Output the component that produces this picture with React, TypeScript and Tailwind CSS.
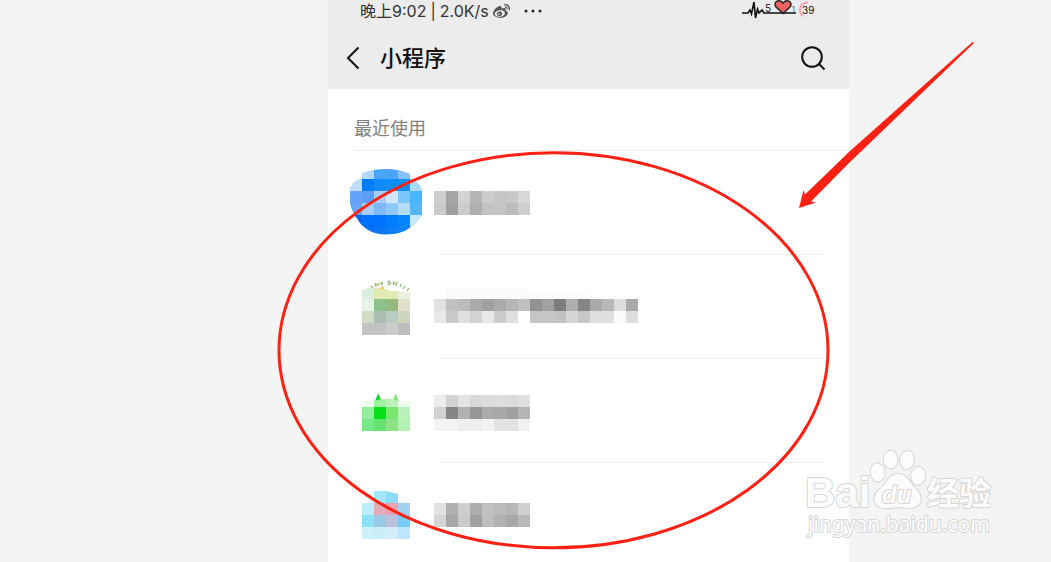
import { FaWeibo } from 'react-icons/fa'

type Cell = [x: number, y: number, color: string]

type MiniProgram = {
	id: string
	Icon: () => React.ReactNode
	nameWidth: number
	nameTop: number
	nameRows: string[][]
	nameHint?: string
}

const CELL = 12

function Cells({ cells }: { cells: Cell[] }) {
	return (
		<>
			{cells.map(([x, y, color]) => (
				<rect key={`${x}-${y}`} x={x} y={y} width={CELL} height={CELL} fill={color} />
			))}
		</>
	)
}

function toCells(rows: string[][], top: number): Cell[] {
	return rows.flatMap((row, r) => row.map((color, c): Cell => [c * CELL, top + r * CELL, color]))
}

function BlueIcon() {
	const rows = [
		['#fff', '#b3d8fb', '#49a5fa', '#49a5fa', '#80c2f9', '#fff'],
		['#bfdcfc', '#007dfb', '#108af8', '#108df7', '#0a8ffb', '#a8dcfb'],
		['#65a2fa', '#5c9ffa', '#a8cdfb', '#cfe6fb', '#7bc6f8', '#4ab5fa'],
		['#6ba5f7', '#a6cdfa', '#80b9fb', '#8fc9fa', '#b4dcf8', '#54b6f6'],
		['#0a6df5', '#0071ff', '#0071ff', '#007efd', '#0586fb', '#c7e7fb'],
	]
	return (
		<svg width="72" height="72" viewBox="0 0 72 72" aria-hidden="true" className="shrink-0">
			<defs>
				<linearGradient id="blue" x1="0" y1="0" x2="1" y2="0">
					<stop offset="0" stopColor="#0062f2" />
					<stop offset="1" stopColor="#1690fa" />
				</linearGradient>
				<clipPath id="blue-clip">
					<path d="M12 7 Q23 3 36 3 Q49 3 60 8 L60 12 Q67 14 72 23 L72 49 L66 56 Q56 68.500 36 68.500 Q16 68.500 7 52 Q3 48 0 38 L0 22 Q4 14 12 12Z" />
				</clipPath>
			</defs>
			<g clipPath="url(#blue-clip)">
				<rect y="49" width="72" height="23" fill="url(#blue)" />
				<Cells cells={toCells(rows, 1)} />
				<rect y="49" width="12" height="12" fill="#0866ee" />
			</g>
		</svg>
	)
}

function ShopIcon() {
	const rows = [
		['#e5f4e7', '#8cc28d', '#96b980', '#e0dfc8'],
		['#d2dbc5', '#acbdb4', '#b8ccc4', '#ccd7bd'],
		['#c3c3c3', '#c3c3c3', '#cbcbcb', '#bdbdbd'],
	]
	return (
		<svg width="72" height="72" viewBox="0 0 72 72" aria-hidden="true" className="shrink-0">
			<g transform="translate(12 0)">
				<path d="M0 29V21Q5 17 12 18V29Z" fill="#daeee0" />
				<path d="M12 29V18Q18 17 24 19Q29 22 36 21V29Z" fill="#e2eab4" />
				<path d="M36 29V21Q41 23 48 22V29Z" fill="#eaf0df" />
				<Cells cells={toCells(rows, 29)} />
			</g>
			<g fill="none" stroke="#9dbb78" strokeWidth="1.300">
				<path d="M21 16l2 2M25 13l1 4M26 15l2-1M28 13l1 3M30 13h3M32 13v3" />
				<path d="M40 11q-2 0-2 1t2 1t-2 2M44 11l-1 4M47 12l-1 4M44 13l2 1M51 14l-1 3M55 16l-2 3M59 18l-2 3" />
			</g>
			<circle cx="32.500" cy="18" r="1.500" fill="#f5c330" />
		</svg>
	)
}

function GreenIcon() {
	const rows = [
		['#91ee9e', '#08df1b', '#77e770', '#b9f3b7'],
		['#75e985', '#65e36e', '#8ce486', '#b5f1b0'],
	]
	return (
		<svg width="72" height="72" viewBox="0 0 72 72" aria-hidden="true" className="shrink-0">
			<g transform="translate(12 0)">
				<path d="M13 27L16 19.500L20 27Z" fill="#16cf31" />
				<path d="M30 27L33.500 19.500L37 27Z" fill="#8ce686" />
				<path d="M0 33V27H12V33Z" fill="#eefbef" />
				<path d="M12 33V27Q18 25 24 25V33Z" fill="#a2f1a3" />
				<path d="M24 33V25Q31 24 36 27V33Z" fill="#bdf3bb" />
				<path d="M36 33V27L48 28V33Z" fill="#edfbed" />
				<Cells cells={toCells(rows, 33)} />
			</g>
		</svg>
	)
}

function PinkIcon() {
	const rows = [
		['#bdebf7', '#e3a9b7', '#eaa1b3', '#a2d1f0'],
		['#8be2f7', '#99c9e5', '#b9c1dd', '#78cdf8'],
		['#cff1fb', '#caeefa', '#d3edfb', '#bce6fc'],
	]
	return (
		<svg width="72" height="72" viewBox="0 0 72 72" aria-hidden="true" className="shrink-0">
			<g transform="translate(12 0)">
				<path d="M12 13H24V25H12Z" fill="#a2e8f8" />
				<path d="M24 13L36 16V25H24Z" fill="#8bdbf8" />
				<path d="M36 17L47 20V25H36Z" fill="#f9fcfc" />
				<Cells cells={toCells(rows, 25)} />
			</g>
		</svg>
	)
}

const programs: MiniProgram[] = [
	{
		id: 'blue',
		Icon: BlueIcon,
		nameWidth: 96,
		nameTop: 25,
		nameRows: [
			['#cecece', '#a5a5a5', '#d3d3d3', '#b5b5b5', '#cdcdcd', '#c5c5c5', '#c8c8c8', '#d7d7d7'],
			['#cacaca', '#a0a0a0', '#cccccc', '#afafaf', '#c4c4c4', '#c5c5c5', '#bcbcbc', '#cecece'],
		],
	},
	{
		id: 'shop',
		Icon: ShopIcon,
		nameWidth: 204,
		nameTop: 29,
		nameHint: 'M12 29V17H60Q84 18 104 21Q150 25 204 27V29Z',
		nameRows: [
			['#e2e2e2', '#c1c1c1', '#bcbcbc', '#a9a9a9', '#a1a1a1', '#aaaaaa', '#b6b6b6', '#c0c0c0', '#929292', '#a0a0a0', '#7d7d7d', '#aeaeae', '#868686', '#aaaaaa', '#b9b9b9', '#dddddd', '#ababab'],
			['#e9e9e9', '#c8c8c8', '#e0e0e0', '#d2d2d2', '#e8e8e8', '#cccccc', '#dfdfdf', '#ffffff', '#c5c5c5', '#c5c5c5', '#c2c2c2', '#d5d5d5', '#c8c8c8', '#dedede', '#e0e0e0', '#fafafa', '#dedede'],
		],
	},
	{
		id: 'green',
		Icon: GreenIcon,
		nameWidth: 96,
		nameTop: 21,
		nameRows: [
			['#ededed', '#d3d3d3', '#e4e4e4', '#d9d9d9', '#dcdcdc', '#dddddd', '#dbdbdb', '#e0e0e0'],
			['#d2d2d2', '#868686', '#b1b1b1', '#969696', '#acacac', '#a9a9a9', '#a1a1a1', '#b5b5b5'],
			['#f3f3f3', '#f3f3f3', '#eeeeee', '#eeeeee', '#f2f2f2', '#e3e3e3', '#e3e3e3', '#f1f1f1'],
		],
	},
	{
		id: 'pink',
		Icon: PinkIcon,
		nameWidth: 96,
		nameTop: 25,
		nameRows: [
			['#e2e2e2', '#b0b0b0', '#cecece', '#adadad', '#c0c0c0', '#bbbbbb', '#b7b7b7', '#cfcfcf'],
			['#d5d5d5', '#a7a7a7', '#cacaca', '#a1a1a1', '#bebebe', '#b2b2b2', '#a8a8a8', '#b9b9b9'],
		],
	},
]

function StatusBar() {
	return (
		<div className="flex h-[22px] items-center pl-8 pr-[29px] text-base leading-5 text-[#333]">
			<span>晚上9:02</span>
			<span className="ml-1">|</span>
			<span className="ml-1">2.0K/s</span>
			<FaWeibo className="ml-1 size-[17px] text-[#555]" />
			<svg width="18" height="4" viewBox="0 0 18 4" className="ml-3.5 fill-[#222]" aria-hidden="true">
				<circle cx="2" cy="2" r="1.500" />
				<circle cx="9" cy="2" r="1.500" />
				<circle cx="16" cy="2" r="1.500" />
			</svg>
			<svg width="78" height="22" viewBox="0 0 78 22" className="ml-auto shrink-0" role="img" aria-label="39">
				<path
					d="M0 13H6L8 10L9.500 14L12 2L13.500 18L15.500 9L17 13L20 10L22 13H54"
					fill="none"
					stroke="#111"
					strokeWidth="1.600"
				/>
				<path
					d="M41 13.500L34 7C30.500 2 37-1.500 41 3C45-1.500 51.500 2 48 7Z"
					fill="#ee6262"
					stroke="#222"
					strokeWidth="1.500"
				/>
				<text x="23" y="12" fontSize="10" fill="#111">
					5
				</text>
				<text x="50" y="12" fontSize="7" fill="#444">
					1
				</text>
				<circle cx="66" cy="10" r="7" fill="none" stroke="#f0e6e6" strokeWidth="2" />
				<path d="M66 2.500A7.500 7.500 0 0 0 61 16" fill="none" stroke="#f5a3b5" strokeWidth="2" />
				<text x="60" y="14" fontSize="10" fill="#111">
					39
				</text>
			</svg>
		</div>
	)
}

function NavBar() {
	return (
		<div className="flex h-[67px] items-center pl-[18px] pr-[22px] pt-1">
			<button type="button" aria-label="返回">
				<svg width="14" height="24" viewBox="0 0 14 24" fill="none" stroke="#111" strokeWidth="2">
					<path d="M12.500 1.500L2 12L12.500 22.500" />
				</svg>
			</button>
			<h1 className="ml-5 text-[22px] font-medium leading-8 text-[#111]">小程序</h1>
			<button type="button" aria-label="搜索" className="ml-auto">
				<svg width="28" height="28" viewBox="0 0 28 28" fill="none" stroke="#111" strokeWidth="2">
					<circle cx="13" cy="13" r="9.800" />
					<path d="M20 20L25.500 25.500" />
				</svg>
			</button>
		</div>
	)
}

function ProgramRow({ program }: { program: MiniProgram }) {
	const { Icon, nameWidth, nameTop, nameRows, nameHint } = program
	return (
		<li>
			<div className="flex gap-3 pb-4 pl-[22px] pt-[15px]">
				<Icon />
				<svg width={nameWidth} height="72" aria-hidden="true" className="shrink-0">
					{nameHint && <path d={nameHint} fill="#fbfbfb" />}
					<Cells cells={toCells(nameRows, nameTop)} />
				</svg>
			</div>
			<div className="ml-[111px] mr-[26px] h-px bg-[#ededed]" />
		</li>
	)
}

function Annotations() {
	return (
		<svg
			width="521"
			height="562"
			viewBox="0 0 521 562"
			className="pointer-events-none absolute left-0 top-0 overflow-visible"
			aria-hidden="true">
			<ellipse cx="225.500" cy="350.300" rx="274.500" ry="197.500" fill="none" stroke="#ff2014" strokeWidth="3" />
			<path
				d="M471 208L475.500 190L477 194.500L522 151L644.500 42Q646 41.500 645.500 43.500L521 163L483 201.500L488 202.500Z"
				fill="#ff2014"
			/>
		</svg>
	)
}

function Watermark() {
	return (
		<svg
			width="200"
			height="96"
			viewBox="0 0 200 96"
			className="pointer-events-none absolute bottom-[20px] right-[50px]"
			role="img"
			aria-label="Baidu 经验 jingyan.baidu.com">
			<g fill="#fcfcfc" stroke="#d6d6d6" strokeWidth="2" strokeLinejoin="round" paintOrder="stroke">
				<text x="4" y="61" fontSize="42" fontWeight="700" fontFamily="Liberation Sans">
					Bai
				</text>
				<ellipse cx="76.500" cy="26.500" rx="7" ry="9" transform="rotate(-8 76.500 26)" />
				<ellipse cx="89.500" cy="13.500" rx="7" ry="9" />
				<ellipse cx="106" cy="14" rx="7" ry="9" transform="rotate(8 106 14)" />
				<ellipse cx="117" cy="30" rx="7" ry="9" transform="rotate(8 117 30)" />
				<path d="M97 28C106 28 108 36 113 41C120 47 122 54 117 59C112 64 104 61 97 61C90 61 82 65 76 59C71 54 73 47 80 42C86 37 88 28 97 28Z" />
				<text x="81" y="57" fontSize="24" fontWeight="700" fontStyle="italic" fontFamily="Liberation Sans">
					du
				</text>
				<text x="126" y="59" fontSize="32" fontWeight="700">
					经验
				</text>
				<text x="7" y="86" fontSize="21" fontFamily="Noto Sans">
					jingyan.baidu.com
				</text>
			</g>
		</svg>
	)
}

export default function App() {
	return (
		<div className="relative grid h-screen grid-cols-[328fr_521fr_202fr] overflow-hidden bg-[#f4f4f4] font-['Inter','Noto_Sans_CJK_SC',sans-serif]">
			<main className="relative col-start-2 min-w-0 bg-white">
				<header className="bg-[#ececec]">
					<StatusBar />
					<NavBar />
				</header>
				<section>
					<h2 className="ml-[26px] border-b border-[#ededed] pb-[7px] pt-[26px] text-lg leading-7 text-[#808080]">最近使用</h2>
					<ul>
						{programs.map(program => (
							<ProgramRow key={program.id} program={program} />
						))}
					</ul>
				</section>
				<Annotations />
			</main>
			<Watermark />
		</div>
	)
}
